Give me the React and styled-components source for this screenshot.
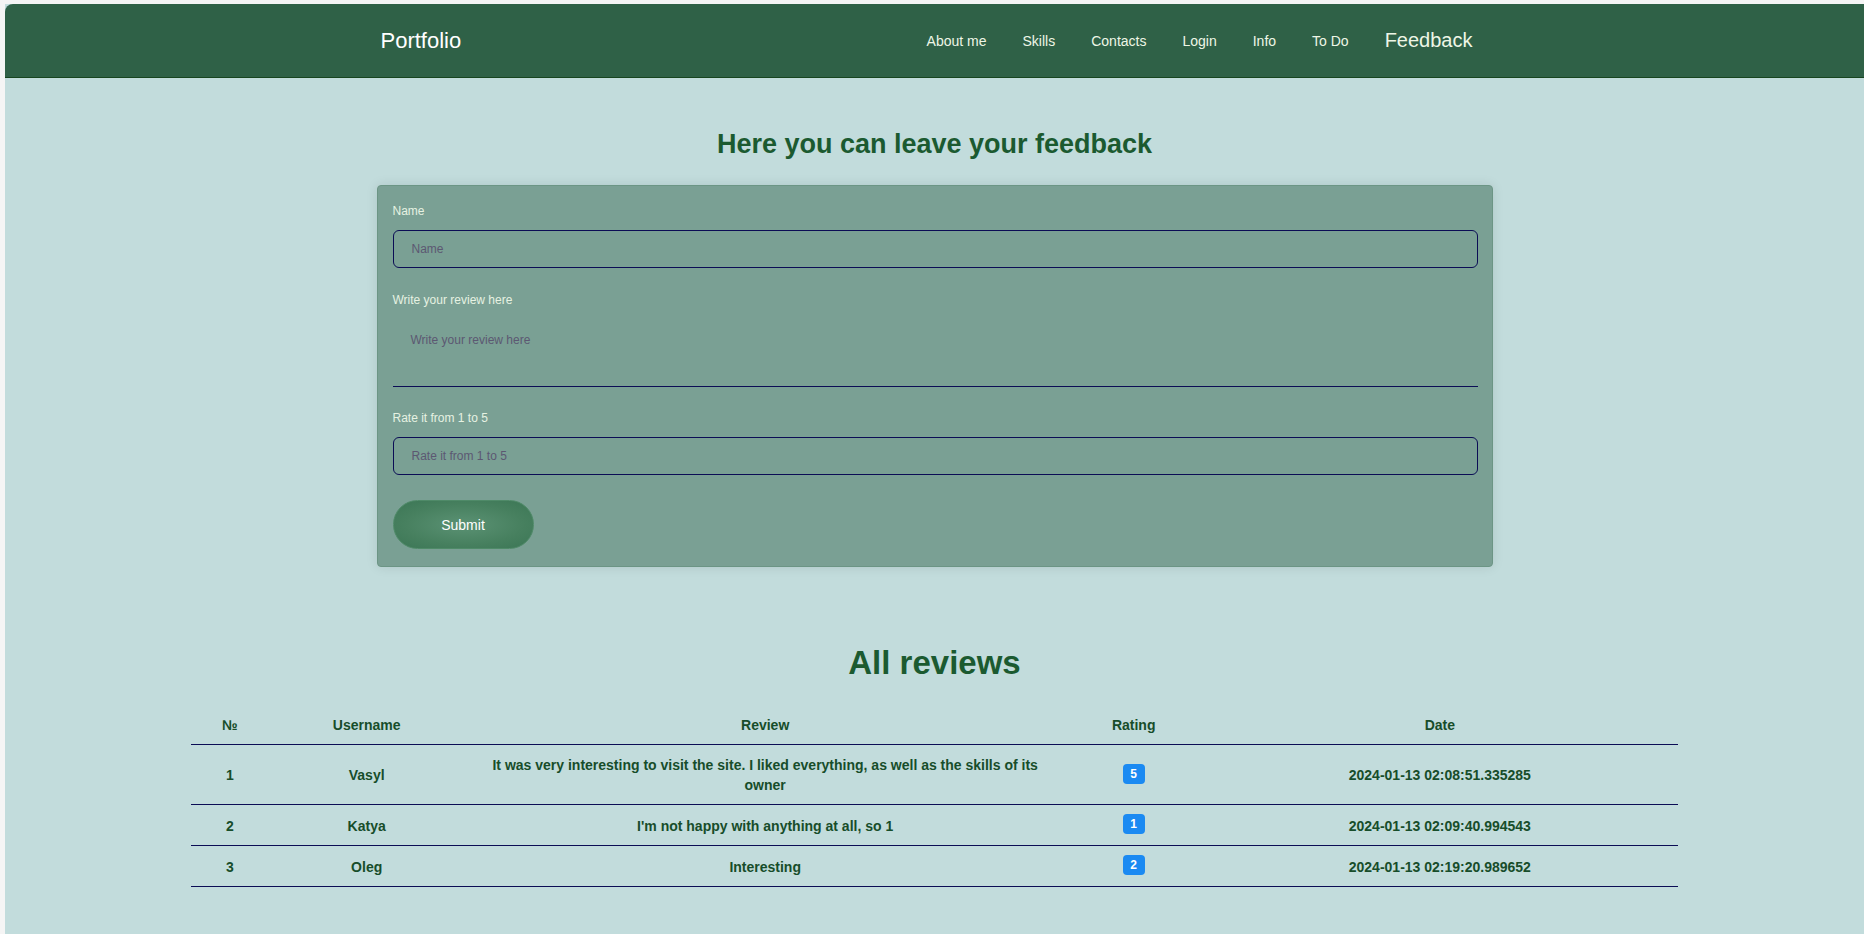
import styled, { createGlobalStyle } from "styled-components";

const GlobalStyle = createGlobalStyle`
  html, body {
    margin: 0;
    padding: 0;
    background: #f5f5f5;
  }
  body {
    padding: 4px 0 0 5px;
    font-family: "Liberation Sans", Arial, sans-serif;
  }
  * {
    box-sizing: border-box;
  }
`;

const Page = styled.div`
  background: #c2dcdc;
  min-height: 930px;
`;

const Header = styled.header`
  height: 74px;
  background: #2f6147;
  border-bottom: 1px solid #17451f;
  border-top-left-radius: 8px;
`;

const HeaderInner = styled.div`
  width: 1116px;
  height: 100%;
  margin: 0 auto;
  display: flex;
  align-items: center;
  justify-content: space-between;
`;

const Brand = styled.a`
  color: #ffffff;
  font-size: 22px;
  margin-left: 4px;
  text-decoration: none;
`;

const Nav = styled.nav`
  display: flex;
  align-items: center;
  gap: 36px;
  padding-right: 20px;
`;

const NavLink = styled.a`
  color: #eef6e6;
  font-size: ${(p) => (p.$active ? "20px" : "14px")};
  text-decoration: none;
`;

const Main = styled.main`
  display: flex;
  flex-direction: column;
  align-items: center;
  padding-bottom: 40px;
`;

const Title = styled.h2`
  margin: 50px 0 25px;
  font-size: 27px;
  line-height: 32px;
  font-weight: 700;
  color: #1b5a30;
`;

const FormCard = styled.form`
  width: 1116px;
  background: #7aa094;
  border: 1px solid #6c9585;
  border-radius: 4px;
  box-shadow: 0 0 12px rgba(0, 0, 0, 0.1);
  padding: 16px 14px 17px 15px;
`;

const Field = styled.div`
  margin-bottom: ${(p) => p.$gap || "23px"};
`;

const Label = styled.label`
  display: block;
  font-size: 12px;
  line-height: 18px;
  color: #e6f2e2;
  margin-bottom: 10px;
`;

const Input = styled.input`
  display: block;
  width: 100%;
  height: 38px;
  padding: 0 18px;
  background: transparent;
  border: 1px solid #0b0d55;
  border-radius: 6px;
  font-family: inherit;
  font-size: 12px;
  outline: none;
  &::placeholder {
    color: #5c5872;
  }
`;

const TextArea = styled.textarea`
  display: block;
  width: 100%;
  height: 68px;
  padding: 14px 18px;
  background: transparent;
  border: none;
  border-bottom: 1px solid #0b0d55;
  font-family: inherit;
  font-size: 12px;
  resize: none;
  outline: none;
  &::placeholder {
    color: #5c5872;
  }
`;

const SubmitButton = styled.button`
  width: 141px;
  height: 49px;
  border: 1px solid #4f8a68;
  border-radius: 25px;
  background: radial-gradient(ellipse at center, #5b9274 0%, #47805f 60%, #3b7655 100%);
  color: #ffffff;
  font-family: inherit;
  font-size: 14px;
  cursor: pointer;
`;

const SubTitle = styled.h2`
  margin: 77px 0 23px;
  font-size: 33px;
  line-height: 38px;
  font-weight: 700;
  color: #1b5a30;
`;

const Table = styled.table`
  width: 80%;
  table-layout: fixed;
  border-collapse: collapse;
  color: #174d2a;
  font-size: 14px;
  font-weight: 700;
`;

const Th = styled.th`
  padding: 10px 10px 9px;
  line-height: 20px;
  text-align: center;
  border-bottom: 1px solid #0b0d55;
`;

const Td = styled.td`
  padding: 10px 10px 9px;
  line-height: 20px;
  text-align: center;
  vertical-align: middle;
  border-bottom: 1px solid #0b0d55;
`;

const Badge = styled.span`
  display: inline-block;
  min-width: 22px;
  padding: 3px 6px;
  border-radius: 4px;
  background: #1a8af2;
  color: #ffffff;
  font-size: 12px;
  line-height: 14px;
  font-weight: 700;
  position: relative;
  top: -2px;
`;

const reviews = [
  {
    id: 1,
    name: "Vasyl",
    text: "It was very interesting to visit the site. I liked everything, as well as the skills of its owner",
    rating: 5,
    date: "2024-01-13 02:08:51.335285",
  },
  {
    id: 2,
    name: "Katya",
    text: "I'm not happy with anything at all, so 1",
    rating: 1,
    date: "2024-01-13 02:09:40.994543",
  },
  {
    id: 3,
    name: "Oleg",
    text: "Interesting",
    rating: 2,
    date: "2024-01-13 02:19:20.989652",
  },
];

const links = ["About me", "Skills", "Contacts", "Login", "Info", "To Do"];

export default function App() {
  return (
    <>
      <GlobalStyle />
      <Page>
        <Header>
          <HeaderInner>
            <Brand href="#">Portfolio</Brand>
            <Nav>
              {links.map((l) => (
                <NavLink key={l} href="#">
                  {l}
                </NavLink>
              ))}
              <NavLink $active href="#">
                Feedback
              </NavLink>
            </Nav>
          </HeaderInner>
        </Header>

        <Main>
          <Title>Here you can leave your feedback</Title>
          <FormCard onSubmit={(e) => e.preventDefault()}>
            <Field>
              <Label>Name</Label>
              <Input placeholder="Name" />
            </Field>
            <Field $gap="22px">
              <Label>Write your review here</Label>
              <TextArea placeholder="Write your review here" />
            </Field>
            <Field $gap="25px">
              <Label>Rate it from 1 to 5</Label>
              <Input placeholder="Rate it from 1 to 5" />
            </Field>
            <SubmitButton type="submit">Submit</SubmitButton>
          </FormCard>

          <SubTitle>All reviews</SubTitle>
          <Table>
            <colgroup>
              <col style={{ width: "5.24%" }} />
              <col style={{ width: "13.16%" }} />
              <col style={{ width: "40.43%" }} />
              <col style={{ width: "9.13%" }} />
              <col style={{ width: "32.04%" }} />
            </colgroup>
            <thead>
              <tr>
                <Th>№</Th>
                <Th>Username</Th>
                <Th>Review</Th>
                <Th>Rating</Th>
                <Th>Date</Th>
              </tr>
            </thead>
            <tbody>
              {reviews.map((r) => (
                <tr key={r.id}>
                  <Td>{r.id}</Td>
                  <Td>{r.name}</Td>
                  <Td>{r.text}</Td>
                  <Td>
                    <Badge>{r.rating}</Badge>
                  </Td>
                  <Td>{r.date}</Td>
                </tr>
              ))}
            </tbody>
          </Table>
        </Main>
      </Page>
    </>
  );
}
